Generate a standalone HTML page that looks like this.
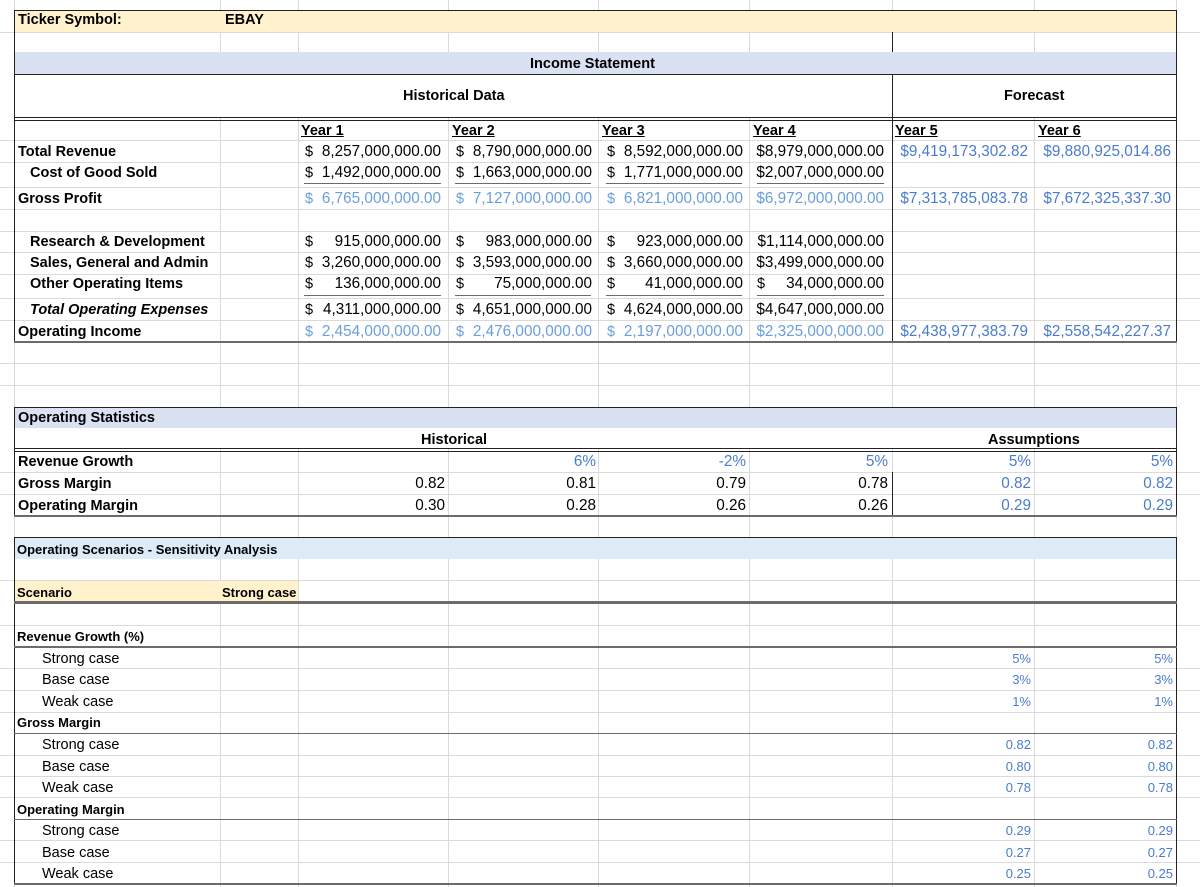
<!DOCTYPE html>
<html><head><meta charset="utf-8"><style>
body{margin:0;width:1200px;height:887px;overflow:hidden;background:#fff;font-family:"Liberation Sans",Arial,sans-serif;font-size:14.5px;color:#000;position:relative}
.a{position:absolute}
.h{position:absolute;height:1px;background:#dadada;left:0;width:1200px}
.v{position:absolute;width:1px;background:#dadada;top:0;height:887px}
.t{position:absolute;height:18px;line-height:18px;white-space:nowrap}
.t[style*="right:"]:not(.s){font-size:15.3px}
.b{font-weight:bold}
.u{text-decoration:underline}
.bl{color:#4a7bd0}
.lb{color:#6a9edc}
.s{font-size:13px}
.k{position:absolute;background:#222}
.g{position:absolute;background:#6b6b6b}
</style></head><body>
<!-- fills -->
<div class="a" style="left:14px;top:10px;width:1162px;height:22px;background:#fff2cc"></div>
<div class="a" style="left:14px;top:52px;width:1162px;height:22px;background:#d9e1f2"></div>
<div class="a" style="left:14px;top:407px;width:1162px;height:21px;background:#d9e1f2"></div>
<div class="a" style="left:14px;top:537px;width:1162px;height:22px;background:#ddebf7"></div>
<div class="a" style="left:14px;top:580px;width:284px;height:22px;background:#fff2cc"></div>
<!-- gridlines -->
<div class="v" style="left:14px"></div><div class="v" style="left:220px"></div><div class="v" style="left:298px"></div><div class="v" style="left:448px"></div><div class="v" style="left:598px"></div><div class="v" style="left:749px"></div><div class="v" style="left:892px"></div><div class="v" style="left:1034px"></div><div class="v" style="left:1176px"></div>
<div class="h" style="top:32px"></div><div class="h" style="top:140px"></div><div class="h" style="top:162px"></div><div class="h" style="top:187px"></div><div class="h" style="top:209px"></div><div class="h" style="top:231px"></div><div class="h" style="top:252px"></div><div class="h" style="top:274px"></div><div class="h" style="top:298px"></div><div class="h" style="top:320px"></div><div class="h" style="top:363px"></div><div class="h" style="top:385px"></div><div class="h" style="top:472px"></div><div class="h" style="top:494px"></div><div class="h" style="top:580px"></div><div class="h" style="top:625px"></div><div class="h" style="top:668px"></div><div class="h" style="top:690px"></div><div class="h" style="top:712px"></div><div class="h" style="top:755px"></div><div class="h" style="top:776px"></div><div class="h" style="top:797px"></div><div class="h" style="top:840px"></div><div class="h" style="top:862px"></div>
<!-- cover gridlines in colored/merged bands -->
<div class="a" style="left:15px;top:11px;width:1161px;height:21px;background:#fff2cc"></div>
<div class="a" style="left:15px;top:52px;width:1161px;height:22px;background:#d9e1f2"></div>
<div class="a" style="left:15px;top:75px;width:1161px;height:43px;background:#fff"></div>
<div class="a" style="left:15px;top:408px;width:1161px;height:20px;background:#d9e1f2"></div>
<div class="a" style="left:15px;top:428px;width:1161px;height:21px;background:#fff"></div>
<div class="a" style="left:15px;top:538px;width:1161px;height:21px;background:#ddebf7"></div>
<div class="a" style="left:15px;top:581px;width:283px;height:21px;background:#fff2cc"></div>
<!-- borders -->
<div class="k" style="left:14px;top:10px;width:1163px;height:1px"></div>
<div class="k" style="left:14px;top:10px;width:1px;height:333px"></div>
<div class="k" style="left:1176px;top:10px;width:1px;height:333px"></div>
<div class="k" style="left:892px;top:32px;width:1px;height:20px"></div>
<div class="k" style="left:892px;top:74px;width:1px;height:268px"></div>
<div class="k" style="left:14px;top:74px;width:1163px;height:1px"></div>
<div class="k" style="left:14px;top:117px;width:1163px;height:1px"></div>
<div class="k" style="left:14px;top:120px;width:1163px;height:1px"></div>
<div class="g" style="left:14px;top:341px;width:1163px;height:2px"></div>
<div class="k" style="left:14px;top:407px;width:1163px;height:1px"></div>
<div class="k" style="left:14px;top:407px;width:1px;height:110px"></div>
<div class="k" style="left:1176px;top:407px;width:1px;height:110px"></div>
<div class="k" style="left:892px;top:472px;width:1px;height:44px"></div>
<div class="k" style="left:14px;top:448px;width:1163px;height:1px"></div>
<div class="k" style="left:14px;top:451px;width:1163px;height:1px"></div>
<div class="g" style="left:14px;top:515px;width:1163px;height:2px"></div>
<div class="k" style="left:14px;top:537px;width:1163px;height:1px"></div>
<div class="k" style="left:14px;top:537px;width:1px;height:347px"></div>
<div class="k" style="left:1176px;top:537px;width:1px;height:347px"></div>
<div class="g" style="left:14px;top:601px;width:1163px;height:3px"></div>
<div class="g" style="left:14px;top:646px;width:1163px;height:2px"></div>
<div class="g" style="left:14px;top:733px;width:1163px;height:1px"></div>
<div class="g" style="left:14px;top:819px;width:1163px;height:1px"></div>
<div class="g" style="left:14px;top:883px;width:1163px;height:2px"></div>
<!-- underlines -->
<div class="g" style="left:304px;top:183px;width:137px;height:1px"></div><div class="g" style="left:455px;top:183px;width:136px;height:1px"></div><div class="g" style="left:606px;top:183px;width:136px;height:1px"></div><div class="g" style="left:757px;top:183px;width:127px;height:1px"></div>
<div class="g" style="left:304px;top:295px;width:137px;height:1px"></div><div class="g" style="left:455px;top:295px;width:136px;height:1px"></div><div class="g" style="left:606px;top:295px;width:136px;height:1px"></div><div class="g" style="left:757px;top:295px;width:127px;height:1px"></div>

<!-- text -->
<div class="t b" style="left:18px;top:11px">Ticker Symbol:</div>
<div class="t b" style="left:225px;top:11px">EBAY</div>
<div class="t b" style="left:530px;top:55px">Income Statement</div>
<div class="t b" style="left:403px;top:87px">Historical Data</div>
<div class="t b" style="left:1004px;top:87px">Forecast</div>
<div class="t b u" style="left:301px;top:122px">Year 1</div><div class="t b u" style="left:452px;top:122px">Year 2</div><div class="t b u" style="left:602px;top:122px">Year 3</div><div class="t b u" style="left:753px;top:122px">Year 4</div><div class="t b u" style="left:895px;top:122px">Year 5</div><div class="t b u" style="left:1038px;top:122px">Year 6</div>

<div class="t b" style="left:18px;top:143px">Total Revenue</div>
<div class="t b" style="left:30px;top:164px">Cost of Good Sold</div>
<div class="t b" style="left:18px;top:190px">Gross Profit</div>
<div class="t b" style="left:30px;top:233px">Research &amp; Development</div>
<div class="t b" style="left:30px;top:254px">Sales, General and Admin</div>
<div class="t b" style="left:30px;top:275px">Other Operating Items</div>
<div class="t b" style="left:30px;top:301px;font-style:italic">Total Operating Expenses</div>
<div class="t b" style="left:18px;top:323px">Operating Income</div>

<div class="t" style="left:305px;top:143px">$</div><div class="t" style="right:759px;top:143px">8,257,000,000.00</div>
<div class="t" style="left:456px;top:143px">$</div><div class="t" style="right:608px;top:143px">8,790,000,000.00</div>
<div class="t" style="left:607px;top:143px">$</div><div class="t" style="right:457px;top:143px">8,592,000,000.00</div>
<div class="t" style="right:316px;top:143px">$8,979,000,000.00</div>
<div class="t bl" style="right:172px;top:143px">$9,419,173,302.82</div>
<div class="t bl" style="right:29px;top:143px">$9,880,925,014.86</div>

<div class="t" style="left:305px;top:164px">$</div><div class="t" style="right:759px;top:164px">1,492,000,000.00</div>
<div class="t" style="left:456px;top:164px">$</div><div class="t" style="right:608px;top:164px">1,663,000,000.00</div>
<div class="t" style="left:607px;top:164px">$</div><div class="t" style="right:457px;top:164px">1,771,000,000.00</div>
<div class="t" style="right:316px;top:164px">$2,007,000,000.00</div>

<div class="t lb" style="left:305px;top:190px">$</div><div class="t lb" style="right:759px;top:190px">6,765,000,000.00</div>
<div class="t lb" style="left:456px;top:190px">$</div><div class="t lb" style="right:608px;top:190px">7,127,000,000.00</div>
<div class="t lb" style="left:607px;top:190px">$</div><div class="t lb" style="right:457px;top:190px">6,821,000,000.00</div>
<div class="t lb" style="right:316px;top:190px">$6,972,000,000.00</div>
<div class="t bl" style="right:172px;top:190px">$7,313,785,083.78</div>
<div class="t bl" style="right:29px;top:190px">$7,672,325,337.30</div>

<div class="t" style="left:305px;top:233px">$</div><div class="t" style="right:759px;top:233px">915,000,000.00</div>
<div class="t" style="left:456px;top:233px">$</div><div class="t" style="right:608px;top:233px">983,000,000.00</div>
<div class="t" style="left:607px;top:233px">$</div><div class="t" style="right:457px;top:233px">923,000,000.00</div>
<div class="t" style="right:316px;top:233px">$1,114,000,000.00</div>

<div class="t" style="left:305px;top:254px">$</div><div class="t" style="right:759px;top:254px">3,260,000,000.00</div>
<div class="t" style="left:456px;top:254px">$</div><div class="t" style="right:608px;top:254px">3,593,000,000.00</div>
<div class="t" style="left:607px;top:254px">$</div><div class="t" style="right:457px;top:254px">3,660,000,000.00</div>
<div class="t" style="right:316px;top:254px">$3,499,000,000.00</div>

<div class="t" style="left:305px;top:275px">$</div><div class="t" style="right:759px;top:275px">136,000,000.00</div>
<div class="t" style="left:456px;top:275px">$</div><div class="t" style="right:608px;top:275px">75,000,000.00</div>
<div class="t" style="left:607px;top:275px">$</div><div class="t" style="right:457px;top:275px">41,000,000.00</div>
<div class="t" style="left:757px;top:275px">$</div><div class="t" style="right:316px;top:275px">34,000,000.00</div>

<div class="t" style="left:305px;top:301px">$</div><div class="t" style="right:759px;top:301px">4,311,000,000.00</div>
<div class="t" style="left:456px;top:301px">$</div><div class="t" style="right:608px;top:301px">4,651,000,000.00</div>
<div class="t" style="left:607px;top:301px">$</div><div class="t" style="right:457px;top:301px">4,624,000,000.00</div>
<div class="t" style="right:316px;top:301px">$4,647,000,000.00</div>

<div class="t lb" style="left:305px;top:323px">$</div><div class="t lb" style="right:759px;top:323px">2,454,000,000.00</div>
<div class="t lb" style="left:456px;top:323px">$</div><div class="t lb" style="right:608px;top:323px">2,476,000,000.00</div>
<div class="t lb" style="left:607px;top:323px">$</div><div class="t lb" style="right:457px;top:323px">2,197,000,000.00</div>
<div class="t lb" style="right:316px;top:323px">$2,325,000,000.00</div>
<div class="t bl" style="right:172px;top:323px">$2,438,977,383.79</div>
<div class="t bl" style="right:29px;top:323px">$2,558,542,227.37</div>

<div class="t b" style="left:18px;top:409px">Operating Statistics</div>
<div class="t b" style="left:421px;top:431px">Historical</div>
<div class="t b" style="left:988px;top:431px">Assumptions</div>
<div class="t b" style="left:18px;top:453px">Revenue Growth</div>
<div class="t b" style="left:18px;top:475px">Gross Margin</div>
<div class="t b" style="left:18px;top:497px">Operating Margin</div>
<div class="t bl" style="right:604px;top:453px">6%</div><div class="t bl" style="right:454px;top:453px">-2%</div><div class="t bl" style="right:312px;top:453px">5%</div><div class="t bl" style="right:169px;top:453px">5%</div><div class="t bl" style="right:27px;top:453px">5%</div>
<div class="t" style="right:755px;top:475px">0.82</div><div class="t" style="right:604px;top:475px">0.81</div><div class="t" style="right:454px;top:475px">0.79</div><div class="t" style="right:312px;top:475px">0.78</div><div class="t bl" style="right:169px;top:475px">0.82</div><div class="t bl" style="right:27px;top:475px">0.82</div>
<div class="t" style="right:755px;top:497px">0.30</div><div class="t" style="right:604px;top:497px">0.28</div><div class="t" style="right:454px;top:497px">0.26</div><div class="t" style="right:312px;top:497px">0.26</div><div class="t bl" style="right:169px;top:497px">0.29</div><div class="t bl" style="right:27px;top:497px">0.29</div>

<div class="t b s" style="left:17px;top:541px">Operating Scenarios - Sensitivity Analysis</div>
<div class="t b s" style="left:17px;top:584px">Scenario</div>
<div class="t b s" style="left:222px;top:584px">Strong case</div>
<div class="t b s" style="left:17px;top:628px">Revenue Growth (%)</div>
<div class="t" style="left:42px;top:650px">Strong case</div>
<div class="t" style="left:42px;top:671px">Base case</div>
<div class="t" style="left:42px;top:693px">Weak case</div>
<div class="t b s" style="left:17px;top:714px">Gross Margin</div>
<div class="t" style="left:42px;top:736px">Strong case</div>
<div class="t" style="left:42px;top:758px">Base case</div>
<div class="t" style="left:42px;top:779px">Weak case</div>
<div class="t b s" style="left:17px;top:801px">Operating Margin</div>
<div class="t" style="left:42px;top:822px">Strong case</div>
<div class="t" style="left:42px;top:844px">Base case</div>
<div class="t" style="left:42px;top:865px">Weak case</div>

<div class="t bl s" style="right:169px;top:650px">5%</div><div class="t bl s" style="right:27px;top:650px">5%</div>
<div class="t bl s" style="right:169px;top:671px">3%</div><div class="t bl s" style="right:27px;top:671px">3%</div>
<div class="t bl s" style="right:169px;top:693px">1%</div><div class="t bl s" style="right:27px;top:693px">1%</div>
<div class="t bl s" style="right:169px;top:736px">0.82</div><div class="t bl s" style="right:27px;top:736px">0.82</div>
<div class="t bl s" style="right:169px;top:758px">0.80</div><div class="t bl s" style="right:27px;top:758px">0.80</div>
<div class="t bl s" style="right:169px;top:779px">0.78</div><div class="t bl s" style="right:27px;top:779px">0.78</div>
<div class="t bl s" style="right:169px;top:822px">0.29</div><div class="t bl s" style="right:27px;top:822px">0.29</div>
<div class="t bl s" style="right:169px;top:844px">0.27</div><div class="t bl s" style="right:27px;top:844px">0.27</div>
<div class="t bl s" style="right:169px;top:865px">0.25</div><div class="t bl s" style="right:27px;top:865px">0.25</div>
</body></html>
